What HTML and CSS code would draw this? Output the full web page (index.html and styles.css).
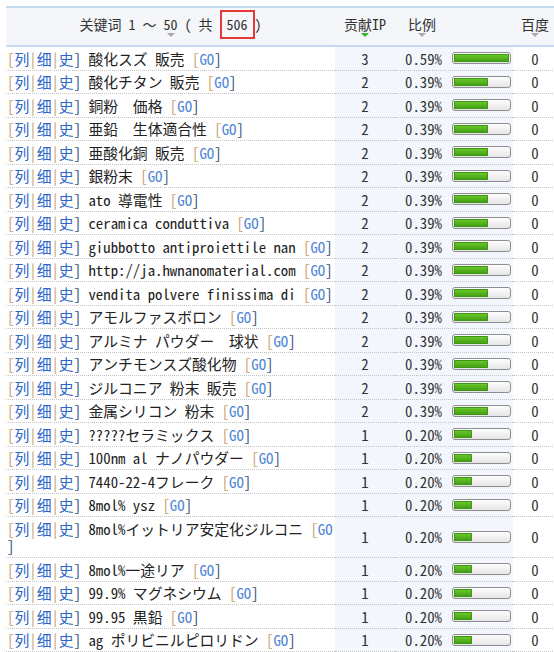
FILE: index.html
```html
<!DOCTYPE html>
<html lang="zh-CN">
<head>
<meta charset="utf-8">
<title>关键词</title>
<link rel="stylesheet" href="styles.css">
</head>
<body>
<table class="kw-table">
  <colgroup>
    <col class="col-kw">
    <col class="col-ip">
    <col class="col-ratio">
    <col class="col-bd">
  </colgroup>
  <thead>
    <tr>
      <th class="th-kw"><span class="th-in"><span class="th-label">关键词 1 ～ 50 ( 共 <span class="total">506</span>)</span><i class="sort"></i></span></th>
      <th class="th-ip"><span class="th-in"><span class="th-label">贡献IP</span><i class="sort sort-on"></i></span></th>
      <th class="th-ratio"><span class="th-in"><span class="th-label">比例</span><i class="sort"></i></span></th>
      <th class="th-bd"><span class="th-in"><span class="th-label">百度</span><i class="sort"></i></span></th>
    </tr>
  </thead>
  <tbody>
    <tr><td class="kw"><span class="ops"><span class="bk">[</span><a href="#" class="op">列</a><span class="sep">|</span><a href="#" class="op">细</a><span class="sep">|</span><a href="#" class="op">史</a><span class="bk-r">]</span></span> 酸化スズ 販売 <span class="go"><span class="bk">[</span><a href="#" class="go-link">GO</a><span class="bk-r">]</span></span></td><td class="ip">3</td><td class="ratio"><div class="ratio-in"><span class="pct">0.59%</span><span class="bar"><span class="fill" style="width:100%"></span></span></div></td><td class="bd">0</td></tr>
    <tr><td class="kw"><span class="ops"><span class="bk">[</span><a href="#" class="op">列</a><span class="sep">|</span><a href="#" class="op">细</a><span class="sep">|</span><a href="#" class="op">史</a><span class="bk-r">]</span></span> 酸化チタン 販売 <span class="go"><span class="bk">[</span><a href="#" class="go-link">GO</a><span class="bk-r">]</span></span></td><td class="ip">2</td><td class="ratio"><div class="ratio-in"><span class="pct">0.39%</span><span class="bar"><span class="fill" style="width:62%"></span></span></div></td><td class="bd">0</td></tr>
    <tr><td class="kw"><span class="ops"><span class="bk">[</span><a href="#" class="op">列</a><span class="sep">|</span><a href="#" class="op">细</a><span class="sep">|</span><a href="#" class="op">史</a><span class="bk-r">]</span></span> 銅粉　価格 <span class="go"><span class="bk">[</span><a href="#" class="go-link">GO</a><span class="bk-r">]</span></span></td><td class="ip">2</td><td class="ratio"><div class="ratio-in"><span class="pct">0.39%</span><span class="bar"><span class="fill" style="width:62%"></span></span></div></td><td class="bd">0</td></tr>
    <tr><td class="kw"><span class="ops"><span class="bk">[</span><a href="#" class="op">列</a><span class="sep">|</span><a href="#" class="op">细</a><span class="sep">|</span><a href="#" class="op">史</a><span class="bk-r">]</span></span> 亜鉛　生体適合性 <span class="go"><span class="bk">[</span><a href="#" class="go-link">GO</a><span class="bk-r">]</span></span></td><td class="ip">2</td><td class="ratio"><div class="ratio-in"><span class="pct">0.39%</span><span class="bar"><span class="fill" style="width:62%"></span></span></div></td><td class="bd">0</td></tr>
    <tr><td class="kw"><span class="ops"><span class="bk">[</span><a href="#" class="op">列</a><span class="sep">|</span><a href="#" class="op">细</a><span class="sep">|</span><a href="#" class="op">史</a><span class="bk-r">]</span></span> 亜酸化銅 販売 <span class="go"><span class="bk">[</span><a href="#" class="go-link">GO</a><span class="bk-r">]</span></span></td><td class="ip">2</td><td class="ratio"><div class="ratio-in"><span class="pct">0.39%</span><span class="bar"><span class="fill" style="width:62%"></span></span></div></td><td class="bd">0</td></tr>
    <tr><td class="kw"><span class="ops"><span class="bk">[</span><a href="#" class="op">列</a><span class="sep">|</span><a href="#" class="op">细</a><span class="sep">|</span><a href="#" class="op">史</a><span class="bk-r">]</span></span> 銀粉末 <span class="go"><span class="bk">[</span><a href="#" class="go-link">GO</a><span class="bk-r">]</span></span></td><td class="ip">2</td><td class="ratio"><div class="ratio-in"><span class="pct">0.39%</span><span class="bar"><span class="fill" style="width:62%"></span></span></div></td><td class="bd">0</td></tr>
    <tr><td class="kw"><span class="ops"><span class="bk">[</span><a href="#" class="op">列</a><span class="sep">|</span><a href="#" class="op">细</a><span class="sep">|</span><a href="#" class="op">史</a><span class="bk-r">]</span></span> ato 導電性 <span class="go"><span class="bk">[</span><a href="#" class="go-link">GO</a><span class="bk-r">]</span></span></td><td class="ip">2</td><td class="ratio"><div class="ratio-in"><span class="pct">0.39%</span><span class="bar"><span class="fill" style="width:62%"></span></span></div></td><td class="bd">0</td></tr>
    <tr><td class="kw"><span class="ops"><span class="bk">[</span><a href="#" class="op">列</a><span class="sep">|</span><a href="#" class="op">细</a><span class="sep">|</span><a href="#" class="op">史</a><span class="bk-r">]</span></span> ceramica conduttiva <span class="go"><span class="bk">[</span><a href="#" class="go-link">GO</a><span class="bk-r">]</span></span></td><td class="ip">2</td><td class="ratio"><div class="ratio-in"><span class="pct">0.39%</span><span class="bar"><span class="fill" style="width:62%"></span></span></div></td><td class="bd">0</td></tr>
    <tr><td class="kw"><span class="ops"><span class="bk">[</span><a href="#" class="op">列</a><span class="sep">|</span><a href="#" class="op">细</a><span class="sep">|</span><a href="#" class="op">史</a><span class="bk-r">]</span></span> giubbotto antiproiettile nan <span class="go"><span class="bk">[</span><a href="#" class="go-link">GO</a><span class="bk-r">]</span></span></td><td class="ip">2</td><td class="ratio"><div class="ratio-in"><span class="pct">0.39%</span><span class="bar"><span class="fill" style="width:62%"></span></span></div></td><td class="bd">0</td></tr>
    <tr><td class="kw"><span class="ops"><span class="bk">[</span><a href="#" class="op">列</a><span class="sep">|</span><a href="#" class="op">细</a><span class="sep">|</span><a href="#" class="op">史</a><span class="bk-r">]</span></span> http://ja.hwnanomaterial.com <span class="go"><span class="bk">[</span><a href="#" class="go-link">GO</a><span class="bk-r">]</span></span></td><td class="ip">2</td><td class="ratio"><div class="ratio-in"><span class="pct">0.39%</span><span class="bar"><span class="fill" style="width:62%"></span></span></div></td><td class="bd">0</td></tr>
    <tr><td class="kw"><span class="ops"><span class="bk">[</span><a href="#" class="op">列</a><span class="sep">|</span><a href="#" class="op">细</a><span class="sep">|</span><a href="#" class="op">史</a><span class="bk-r">]</span></span> vendita polvere finissima di <span class="go"><span class="bk">[</span><a href="#" class="go-link">GO</a><span class="bk-r">]</span></span></td><td class="ip">2</td><td class="ratio"><div class="ratio-in"><span class="pct">0.39%</span><span class="bar"><span class="fill" style="width:62%"></span></span></div></td><td class="bd">0</td></tr>
    <tr><td class="kw"><span class="ops"><span class="bk">[</span><a href="#" class="op">列</a><span class="sep">|</span><a href="#" class="op">细</a><span class="sep">|</span><a href="#" class="op">史</a><span class="bk-r">]</span></span> アモルファスボロン <span class="go"><span class="bk">[</span><a href="#" class="go-link">GO</a><span class="bk-r">]</span></span></td><td class="ip">2</td><td class="ratio"><div class="ratio-in"><span class="pct">0.39%</span><span class="bar"><span class="fill" style="width:62%"></span></span></div></td><td class="bd">0</td></tr>
    <tr><td class="kw"><span class="ops"><span class="bk">[</span><a href="#" class="op">列</a><span class="sep">|</span><a href="#" class="op">细</a><span class="sep">|</span><a href="#" class="op">史</a><span class="bk-r">]</span></span> アルミナ パウダー　球状 <span class="go"><span class="bk">[</span><a href="#" class="go-link">GO</a><span class="bk-r">]</span></span></td><td class="ip">2</td><td class="ratio"><div class="ratio-in"><span class="pct">0.39%</span><span class="bar"><span class="fill" style="width:62%"></span></span></div></td><td class="bd">0</td></tr>
    <tr><td class="kw"><span class="ops"><span class="bk">[</span><a href="#" class="op">列</a><span class="sep">|</span><a href="#" class="op">细</a><span class="sep">|</span><a href="#" class="op">史</a><span class="bk-r">]</span></span> アンチモンスズ酸化物 <span class="go"><span class="bk">[</span><a href="#" class="go-link">GO</a><span class="bk-r">]</span></span></td><td class="ip">2</td><td class="ratio"><div class="ratio-in"><span class="pct">0.39%</span><span class="bar"><span class="fill" style="width:62%"></span></span></div></td><td class="bd">0</td></tr>
    <tr><td class="kw"><span class="ops"><span class="bk">[</span><a href="#" class="op">列</a><span class="sep">|</span><a href="#" class="op">细</a><span class="sep">|</span><a href="#" class="op">史</a><span class="bk-r">]</span></span> ジルコニア 粉末 販売 <span class="go"><span class="bk">[</span><a href="#" class="go-link">GO</a><span class="bk-r">]</span></span></td><td class="ip">2</td><td class="ratio"><div class="ratio-in"><span class="pct">0.39%</span><span class="bar"><span class="fill" style="width:62%"></span></span></div></td><td class="bd">0</td></tr>
    <tr><td class="kw"><span class="ops"><span class="bk">[</span><a href="#" class="op">列</a><span class="sep">|</span><a href="#" class="op">细</a><span class="sep">|</span><a href="#" class="op">史</a><span class="bk-r">]</span></span> 金属シリコン 粉末 <span class="go"><span class="bk">[</span><a href="#" class="go-link">GO</a><span class="bk-r">]</span></span></td><td class="ip">2</td><td class="ratio"><div class="ratio-in"><span class="pct">0.39%</span><span class="bar"><span class="fill" style="width:62%"></span></span></div></td><td class="bd">0</td></tr>
    <tr><td class="kw"><span class="ops"><span class="bk">[</span><a href="#" class="op">列</a><span class="sep">|</span><a href="#" class="op">细</a><span class="sep">|</span><a href="#" class="op">史</a><span class="bk-r">]</span></span> ?????セラミックス <span class="go"><span class="bk">[</span><a href="#" class="go-link">GO</a><span class="bk-r">]</span></span></td><td class="ip">1</td><td class="ratio"><div class="ratio-in"><span class="pct">0.20%</span><span class="bar"><span class="fill" style="width:33%"></span></span></div></td><td class="bd">0</td></tr>
    <tr><td class="kw"><span class="ops"><span class="bk">[</span><a href="#" class="op">列</a><span class="sep">|</span><a href="#" class="op">细</a><span class="sep">|</span><a href="#" class="op">史</a><span class="bk-r">]</span></span> 100nm al ナノパウダー <span class="go"><span class="bk">[</span><a href="#" class="go-link">GO</a><span class="bk-r">]</span></span></td><td class="ip">1</td><td class="ratio"><div class="ratio-in"><span class="pct">0.20%</span><span class="bar"><span class="fill" style="width:33%"></span></span></div></td><td class="bd">0</td></tr>
    <tr><td class="kw"><span class="ops"><span class="bk">[</span><a href="#" class="op">列</a><span class="sep">|</span><a href="#" class="op">细</a><span class="sep">|</span><a href="#" class="op">史</a><span class="bk-r">]</span></span> 7440-22-4フレーク <span class="go"><span class="bk">[</span><a href="#" class="go-link">GO</a><span class="bk-r">]</span></span></td><td class="ip">1</td><td class="ratio"><div class="ratio-in"><span class="pct">0.20%</span><span class="bar"><span class="fill" style="width:33%"></span></span></div></td><td class="bd">0</td></tr>
    <tr><td class="kw"><span class="ops"><span class="bk">[</span><a href="#" class="op">列</a><span class="sep">|</span><a href="#" class="op">细</a><span class="sep">|</span><a href="#" class="op">史</a><span class="bk-r">]</span></span> 8mol% ysz <span class="go"><span class="bk">[</span><a href="#" class="go-link">GO</a><span class="bk-r">]</span></span></td><td class="ip">1</td><td class="ratio"><div class="ratio-in"><span class="pct">0.20%</span><span class="bar"><span class="fill" style="width:33%"></span></span></div></td><td class="bd">0</td></tr>
    <tr><td class="kw"><span class="ops"><span class="bk">[</span><a href="#" class="op">列</a><span class="sep">|</span><a href="#" class="op">细</a><span class="sep">|</span><a href="#" class="op">史</a><span class="bk-r">]</span></span> 8mol%イットリア安定化ジルコニ <span class="go"><span class="bk">[</span><a href="#" class="go-link">GO</a><br><span class="bk-r">]</span></span></td><td class="ip">1</td><td class="ratio"><div class="ratio-in"><span class="pct">0.20%</span><span class="bar"><span class="fill" style="width:33%"></span></span></div></td><td class="bd">0</td></tr>
    <tr><td class="kw"><span class="ops"><span class="bk">[</span><a href="#" class="op">列</a><span class="sep">|</span><a href="#" class="op">细</a><span class="sep">|</span><a href="#" class="op">史</a><span class="bk-r">]</span></span> 8mol%一途リア <span class="go"><span class="bk">[</span><a href="#" class="go-link">GO</a><span class="bk-r">]</span></span></td><td class="ip">1</td><td class="ratio"><div class="ratio-in"><span class="pct">0.20%</span><span class="bar"><span class="fill" style="width:33%"></span></span></div></td><td class="bd">0</td></tr>
    <tr><td class="kw"><span class="ops"><span class="bk">[</span><a href="#" class="op">列</a><span class="sep">|</span><a href="#" class="op">细</a><span class="sep">|</span><a href="#" class="op">史</a><span class="bk-r">]</span></span> 99.9% マグネシウム <span class="go"><span class="bk">[</span><a href="#" class="go-link">GO</a><span class="bk-r">]</span></span></td><td class="ip">1</td><td class="ratio"><div class="ratio-in"><span class="pct">0.20%</span><span class="bar"><span class="fill" style="width:33%"></span></span></div></td><td class="bd">0</td></tr>
    <tr><td class="kw"><span class="ops"><span class="bk">[</span><a href="#" class="op">列</a><span class="sep">|</span><a href="#" class="op">细</a><span class="sep">|</span><a href="#" class="op">史</a><span class="bk-r">]</span></span> 99.95 黒鉛 <span class="go"><span class="bk">[</span><a href="#" class="go-link">GO</a><span class="bk-r">]</span></span></td><td class="ip">1</td><td class="ratio"><div class="ratio-in"><span class="pct">0.20%</span><span class="bar"><span class="fill" style="width:33%"></span></span></div></td><td class="bd">0</td></tr>
    <tr><td class="kw"><span class="ops"><span class="bk">[</span><a href="#" class="op">列</a><span class="sep">|</span><a href="#" class="op">细</a><span class="sep">|</span><a href="#" class="op">史</a><span class="bk-r">]</span></span> ag ポリビニルピロリドン <span class="go"><span class="bk">[</span><a href="#" class="go-link">GO</a><span class="bk-r">]</span></span></td><td class="ip">1</td><td class="ratio"><div class="ratio-in"><span class="pct">0.20%</span><span class="bar"><span class="fill" style="width:33%"></span></span></div></td><td class="bd">0</td></tr>
  </tbody>
</table>
</body>
</html>
```

FILE: styles.css
```css
html, body {
  margin: 0;
  padding: 0;
  background: #ffffff;
  overflow: hidden;
}

body {
  padding: 6px 0 0 6px;
  font-family: "Noto Sans Mono CJK SC", "Noto Sans CJK SC", monospace;
  color: #222222;
}

.kw-table {
  border-collapse: collapse;
  table-layout: fixed;
  width: 551px;
  font-size: 14.8px;
}

.col-kw { width: 329px; }
.col-ip { width: 60px; }
.col-ratio { width: 118px; }
.col-bd { width: 44px; }

/* header */
.kw-table th {
  background: #f4f6f9;
  border-top: 2px solid #c6daf2;
  border-bottom: 2px solid #c6daf2;
  padding: 8px 0;
  font-weight: normal;
  font-size: 14px;
  line-height: 16px;
  color: #333333;
  vertical-align: top;
  text-align: center;
  white-space: nowrap;
}

.th-ratio {
  text-align: left !important;
}

.th-ratio .th-in {
  margin-left: 13px;
}

.th-in {
  display: inline-block;
  vertical-align: top;
}

.th-label {
  display: block;
}

.sort {
  display: block;
  width: 0;
  height: 0;
  margin: 1px auto 0;
  border-left: 4px solid transparent;
  border-right: 4px solid transparent;
  border-top: 4px solid #a9a9a9;
}

.sort-on {
  border-top-color: #2fb52f;
}

.total {
  display: inline-block;
  border: 2px solid #e53935;
  padding: 5px 5px 6px;
  line-height: 14px;
  margin: -7px 0;
}

/* body */
.kw-table td {
  padding: 2.5px 0;
  line-height: 17.5px;
  border-bottom: 1px dotted #c4c4c4;
  vertical-align: middle;
  white-space: nowrap;
  color: #222222;
}

.kw-table td.kw {
  padding-left: 1px;
}

.kw a {
  text-decoration: none;
}

.op {
  color: #2c66c9;
}

.bk,
.sep {
  color: #c9a06a;
}

.bk-r {
  color: #34507a;
}

.go-link {
  color: #4f86d6;
}

.kw-table td.ip,
.kw-table td.ratio {
  background: #f3f7fd;
}

.kw-table td.ip,
.kw-table td.bd {
  text-align: center;
  color: #333333;
}

.ratio-in {
  display: flex;
  align-items: center;
  justify-content: flex-end;
  padding-right: 2px;
}

.pct {
  color: #333333;
}

.bar {
  display: flex;
  box-sizing: border-box;
  width: 59px;
  height: 12px;
  margin-left: 10px;
  padding: 1px;
  border: 1px solid #8e8e8e;
  border-radius: 3px;
  background: linear-gradient(#fdfdfd, #e6e6e6);
}

.fill {
  display: block;
  height: 100%;
  border-radius: 1px;
  background: linear-gradient(#6dcd2c, #3e9c10);
  box-shadow: inset 0 0 0 1px #3f9415;
}
```
